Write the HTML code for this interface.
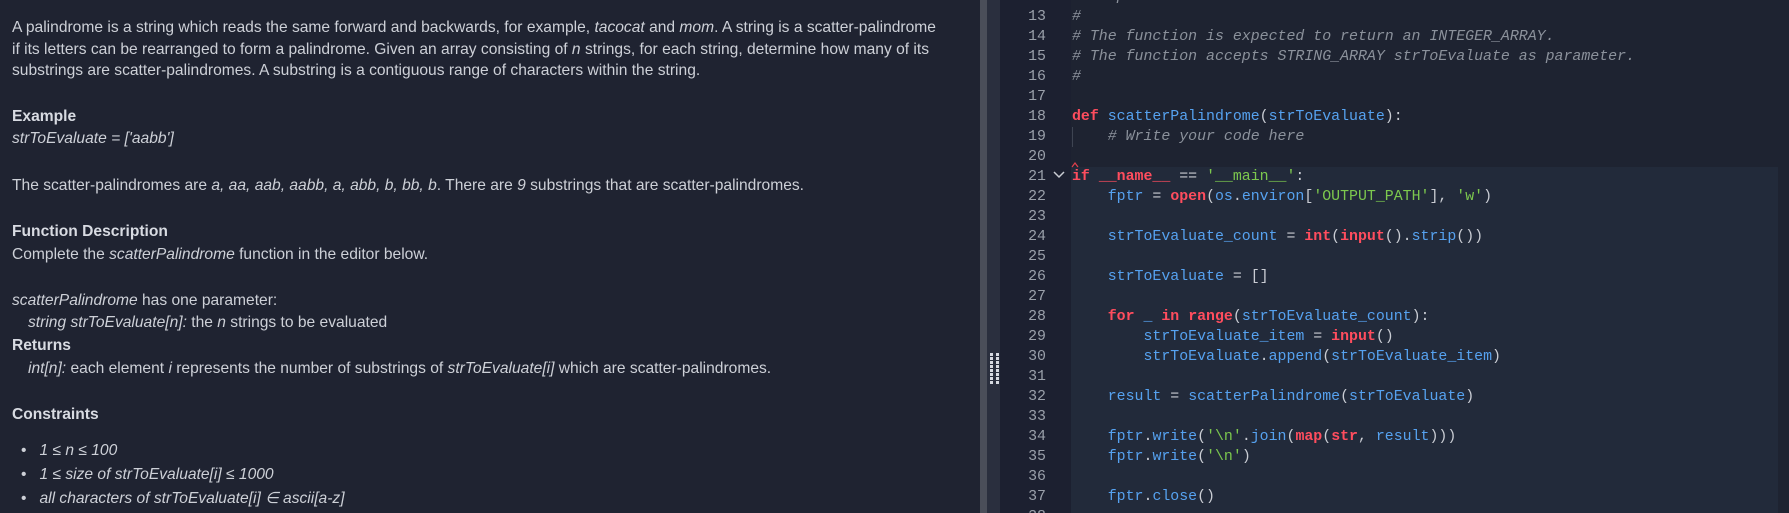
<!DOCTYPE html>
<html><head><meta charset="utf-8"><style>
*{margin:0;padding:0;box-sizing:border-box}
html{width:1789px;height:513px;overflow:hidden}
body{width:1789px;height:513px;overflow:hidden;background:#1f2331;position:relative;font-family:"Liberation Sans",sans-serif}
#left{position:absolute;left:0;top:0;width:980px;height:513px;background:#1f2331;color:#cdd0d7;font-size:15.6px}
#left div{position:absolute;left:12px;white-space:nowrap;line-height:20px}
#left b{color:#d8dbe2}
#div1{position:absolute;left:980px;top:0;width:7px;height:513px;background:#4a4e59}
#div2{position:absolute;left:987px;top:0;width:13px;height:513px;background:#2a2f3e}
.dot{position:absolute;width:3px;height:3px;background:#d8dbe2}
#gutter{position:absolute;left:1000px;top:0;width:71px;height:513px;background:#1c2030}
#code{position:absolute;left:1071px;top:0;width:718px;height:513px;background:#1e2331}
#hl{position:absolute;left:1071px;top:167px;width:707px;height:346px;background:#222a3a}
#clip{position:absolute;left:0;top:0;width:1789px;height:513px;overflow:hidden}
.ln{position:absolute;left:1000px;width:46px;text-align:right;font-family:"Liberation Mono",monospace;font-size:14.9px;color:#9aa0aa;line-height:20px}
.cl{position:absolute;left:1072px;font-family:"Liberation Mono",monospace;font-size:14.9px;color:#c9ccd3;line-height:20px;white-space:pre}
.c{color:#8b919b;font-style:italic}
.k{color:#ff4d5e;font-weight:bold}
.b{color:#56a2f0}
.s{color:#7cc84e}
</style></head><body>
<div id="left">
<div style="top:18px">A palindrome is a string which reads the same forward and backwards, for example, <i>tacocat</i> and <i>mom</i>. A string is a scatter-palindrome</div>
<div style="top:40px">if its letters can be rearranged to form a palindrome. Given an array consisting of <i>n</i> strings, for each string, determine how many of its</div>
<div style="top:61px">substrings are scatter-palindromes. A substring is a contiguous range of characters within the string.</div>
<div style="top:107px"><b>Example</b></div>
<div style="top:129px"><i>strToEvaluate = ['aabb']</i></div>
<div style="top:176px">The scatter-palindromes are <i>a, aa, aab, aabb, a, abb, b, bb, b</i>. There are <i>9</i> substrings that are scatter-palindromes.</div>
<div style="top:222px"><b>Function Description</b></div>
<div style="top:245px">Complete the <i>scatterPalindrome</i> function in the editor below.</div>
<div style="top:291px"><i>scatterPalindrome</i> has one parameter:</div>
<div style="top:313px;left:28px"><i>string strToEvaluate[n]:</i> the <i>n</i> strings to be evaluated</div>
<div style="top:336px"><b>Returns</b></div>
<div style="top:359px;left:28px"><i>int[n]:</i> each element <i>i</i> represents the number of substrings of <i>strToEvaluate[i]</i> which are scatter-palindromes.</div>
<div style="top:405px"><b>Constraints</b></div>
<div style="top:441px;left:21px">•&nbsp;&nbsp;&nbsp;<i>1 ≤ n ≤ 100</i></div>
<div style="top:465px;left:21px">•&nbsp;&nbsp;&nbsp;<i>1 ≤ size of strToEvaluate[i] ≤ 1000</i></div>
<div style="top:489px;left:21px">•&nbsp;&nbsp;&nbsp;<i>all characters of strToEvaluate[i] ∈ ascii[a-z]</i></div>
</div>
<div id="div1"></div><div id="div2"></div>
<div id="gutter"></div><div id="code"></div><div id="hl"></div>
<div style="position:absolute;left:1072px;top:127px;width:1px;height:20px;background:#3e4452"></div>
<svg style="position:absolute;left:1053px;top:170px" width="12" height="10"><path d="M1 2 L6 7 L11 2" stroke="#c9ccd3" stroke-width="1.5" fill="none"/></svg>
<svg style="position:absolute;left:1071px;top:162px" width="12" height="6"><path d="M1 5 L4 1 L7 5" stroke="#e0404c" stroke-width="1.2" fill="none"/></svg>
<div id="clip"></div>
<script>
var L=[
[12,'<span class="c"># Complete the \'scatterPalindrome\' function below.</span>'],
[13,'<span class="c">#</span>'],
[14,'<span class="c"># The function is expected to return an INTEGER_ARRAY.</span>'],
[15,'<span class="c"># The function accepts STRING_ARRAY strToEvaluate as parameter.</span>'],
[16,'<span class="c">#</span>'],
[17,''],
[18,'<span class="k">def</span> <span class="b">scatterPalindrome</span>(<span class="b">strToEvaluate</span>):'],
[19,'    <span class="c"># Write your code here</span>'],
[20,''],
[21,'<span class="k">if</span> <span class="k">__name__</span> == <span class="s">\'__main__\'</span>:'],
[22,'    <span class="b">fptr</span> = <span class="k">open</span>(<span class="b">os</span>.<span class="b">environ</span>[<span class="s">\'OUTPUT_PATH\'</span>], <span class="s">\'w\'</span>)'],
[23,''],
[24,'    <span class="b">strToEvaluate_count</span> = <span class="k">int</span>(<span class="k">input</span>().<span class="b">strip</span>())'],
[25,''],
[26,'    <span class="b">strToEvaluate</span> = []'],
[27,''],
[28,'    <span class="k">for</span> <span class="b">_</span> <span class="k">in</span> <span class="k">range</span>(<span class="b">strToEvaluate_count</span>):'],
[29,'        <span class="b">strToEvaluate_item</span> = <span class="k">input</span>()'],
[30,'        <span class="b">strToEvaluate</span>.<span class="b">append</span>(<span class="b">strToEvaluate_item</span>)'],
[31,''],
[32,'    <span class="b">result</span> = <span class="b">scatterPalindrome</span>(<span class="b">strToEvaluate</span>)'],
[33,''],
[34,'    <span class="b">fptr</span>.<span class="b">write</span>(<span class="s">\'\\n\'</span>.<span class="b">join</span>(<span class="k">map</span>(<span class="k">str</span>, <span class="b">result</span>)))'],
[35,'    <span class="b">fptr</span>.<span class="b">write</span>(<span class="s">\'\\n\'</span>)'],
[36,''],
[37,'    <span class="b">fptr</span>.<span class="b">close</span>()'],
[38,'']];
var h='';
L.forEach(function(l){var t=7+(l[0]-13)*20;h+='<div class="ln" style="top:'+t+'px">'+l[0]+'</div><div class="cl" style="top:'+t+'px">'+l[1]+'</div>';});
for(var y=353;y<=383;y+=4){h+='<div class="dot" style="left:990px;top:'+y+'px"></div><div class="dot" style="left:996px;top:'+y+'px"></div>';}
document.getElementById('clip').innerHTML=h;
</script>
</body></html>
